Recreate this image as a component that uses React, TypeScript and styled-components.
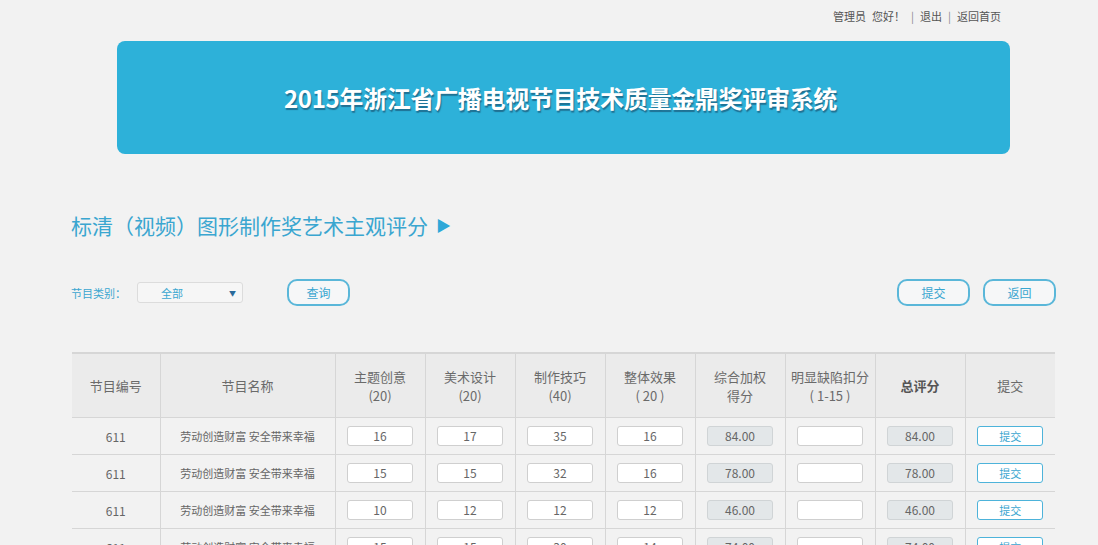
import React from "react";
import styled, { createGlobalStyle } from "styled-components";

const Global = createGlobalStyle`
  html, body { margin: 0; padding: 0; background: #f2f2f2; }
  body { font-family: "Noto Sans CJK SC", "Noto Sans", "Liberation Sans", sans-serif; color: #666; }
`;

const Page = styled.div`
  width: 1098px;
  height: 545px;
  overflow: hidden;
  background: #f2f2f2;
`;

const TopBar = styled.div`
  display: flex;
  justify-content: flex-end;
  align-items: center;
  height: 32px;
  padding-right: 97px;
  font-size: 11px;
  color: #555;
  gap: 6px;
`;

const Sep = styled.span`
  color: #888;
`;

const Banner = styled.div`
  margin: 9px 88px 0 117px;
  height: 113px;
  border-radius: 8px;
  background: #2db1d9;
  display: flex;
  align-items: center;
  justify-content: center;
`;

const BannerTitle = styled.h1`
  margin: 0;
  font-size: 24px;
  font-weight: 700;
  color: #ffffff;
  letter-spacing: -0.3px;
  text-shadow: 1px 2px 1px rgba(20, 60, 90, 0.55);
  transform: translateX(-3px);
`;

const Heading = styled.h2`
  margin: 56px 0 0 71px;
  height: 30px;
  line-height: 30px;
  font-size: 21px;
  font-weight: 400;
  color: #3aa6d0;
  display: flex;
  align-items: center;
  gap: 8px;
`;

const Arrow = styled.span`
  font-size: 15px;
  color: #2da8d8;
`;

const FilterRow = styled.div`
  margin-top: 39px;
  height: 27px;
  display: flex;
  align-items: center;
  justify-content: space-between;
  padding: 0 42px 0 71px;
`;

const FilterLeft = styled.div`
  display: flex;
  align-items: center;
`;

const Label = styled.span`
  font-size: 11px;
  color: #3aa6d0;
  margin-right: 11px;
`;

const Select = styled.div`
  width: 106px;
  height: 21px;
  box-sizing: border-box;
  border: 1px solid #dcdcdc;
  border-radius: 3px;
  background: #f6f6f6;
  display: flex;
  align-items: center;
  justify-content: space-between;
  padding: 0 6px 0 23px;
  font-size: 11px;
  color: #3aa6d0;
  margin-right: 44px;
`;

const Caret = styled.span`
  font-size: 7px;
  color: #2a6a9a;
`;

const OutlineButton = styled.button<{ $w?: number }>`
  width: ${(p) => p.$w ?? 63}px;
  height: 27px;
  box-sizing: border-box;
  border: 2px solid #5ab7d9;
  border-radius: 10px;
  background: #f6f7f8;
  color: #3aa6d0;
  font-size: 12px;
  font-family: inherit;
  padding: 0;
  cursor: pointer;
`;

const FilterRight = styled.div`
  display: flex;
  gap: 13px;
`;

const Table = styled.table`
  margin: 46px 0 0 72px;
  width: 983px;
  border-collapse: collapse;
  table-layout: fixed;
  border-top: 2px solid #d6d6d6;
`;

const Th = styled.th<{ $bold?: boolean }>`
  height: 63px;
  background: #ebebeb;
  font-size: 13px;
  line-height: 19px;
  font-weight: ${(p) => (p.$bold ? 700 : 400)};
  color: ${(p) => (p.$bold ? "#555" : "#6a6a6a")};
  text-align: center;
  border-left: 1px solid #d6d6d6;
  border-bottom: 1px solid #d6d6d6;
  padding: 0;
  &:first-child { border-left: none; }
`;

const Td = styled.td`
  height: 36px;
  text-align: center;
  font-size: 12px;
  color: #666;
  border-left: 1px solid #d6d6d6;
  border-bottom: 1px solid #d6d6d6;
  padding: 0;
  &:first-child { border-left: none; }
`;

const NameTd = styled(Td)`
  font-size: 11px;
`;

const ScoreBox = styled.div<{ $readonly?: boolean }>`
  width: 66px;
  height: 20px;
  box-sizing: border-box;
  margin: 0 auto;
  border: 1px solid ${(p) => (p.$readonly ? "#d0d4d6" : "#cfcfcf")};
  border-radius: 3px;
  background: ${(p) => (p.$readonly ? "#e3e7e9" : "#ffffff")};
  font-size: 12px;
  line-height: 18px;
  color: #666;
  text-align: center;
`;

const RowButton = styled.button`
  width: 66px;
  height: 20px;
  box-sizing: border-box;
  border: 1px solid #4db3da;
  border-radius: 3px;
  background: #ffffff;
  color: #3aa6d0;
  font-size: 11px;
  font-family: inherit;
  padding: 0;
  line-height: 18px;
`;

const rows = [
  ["16", "17", "35", "16", "84.00", "84.00"],
  ["15", "15", "32", "16", "78.00", "78.00"],
  ["10", "12", "12", "12", "46.00", "46.00"],
  ["15", "15", "30", "14", "74.00", "74.00"],
];

const widths = [88, 175, 90, 90, 90, 90, 90, 90, 90, 90];

export default function App() {
  return (
    <Page>
      <Global />
      <TopBar>
        <span>管理员</span>
        <span>您好！</span>
        <Sep>|</Sep>
        <span>退出</span>
        <Sep>|</Sep>
        <span>返回首页</span>
      </TopBar>
      <Banner>
        <BannerTitle>2015年浙江省广播电视节目技术质量金鼎奖评审系统</BannerTitle>
      </Banner>
      <Heading>
        标清（视频）图形制作奖艺术主观评分<Arrow>▶</Arrow>
      </Heading>
      <FilterRow>
        <FilterLeft>
          <Label>节目类别：</Label>
          <Select>
            <span>全部</span>
            <Caret>▼</Caret>
          </Select>
          <OutlineButton>查询</OutlineButton>
        </FilterLeft>
        <FilterRight>
          <OutlineButton $w={73}>提交</OutlineButton>
          <OutlineButton $w={73}>返回</OutlineButton>
        </FilterRight>
      </FilterRow>
      <Table>
        <colgroup>
          {widths.map((w, i) => (
            <col key={i} style={{ width: w }} />
          ))}
        </colgroup>
        <thead>
          <tr>
            <Th>节目编号</Th>
            <Th>节目名称</Th>
            <Th>主题创意<br />(20)</Th>
            <Th>美术设计<br />(20)</Th>
            <Th>制作技巧<br />(40)</Th>
            <Th>整体效果<br />( 20 )</Th>
            <Th>综合加权<br />得分</Th>
            <Th>明显缺陷扣分<br />( 1-15 )</Th>
            <Th $bold>总评分</Th>
            <Th>提交</Th>
          </tr>
        </thead>
        <tbody>
          {rows.map((r, i) => (
            <tr key={i}>
              <Td>611</Td>
              <NameTd>劳动创造财富 安全带来幸福</NameTd>
              <Td><ScoreBox>{r[0]}</ScoreBox></Td>
              <Td><ScoreBox>{r[1]}</ScoreBox></Td>
              <Td><ScoreBox>{r[2]}</ScoreBox></Td>
              <Td><ScoreBox>{r[3]}</ScoreBox></Td>
              <Td><ScoreBox $readonly>{r[4]}</ScoreBox></Td>
              <Td><ScoreBox /></Td>
              <Td><ScoreBox $readonly>{r[5]}</ScoreBox></Td>
              <Td><RowButton>提交</RowButton></Td>
            </tr>
          ))}
        </tbody>
      </Table>
    </Page>
  );
}
